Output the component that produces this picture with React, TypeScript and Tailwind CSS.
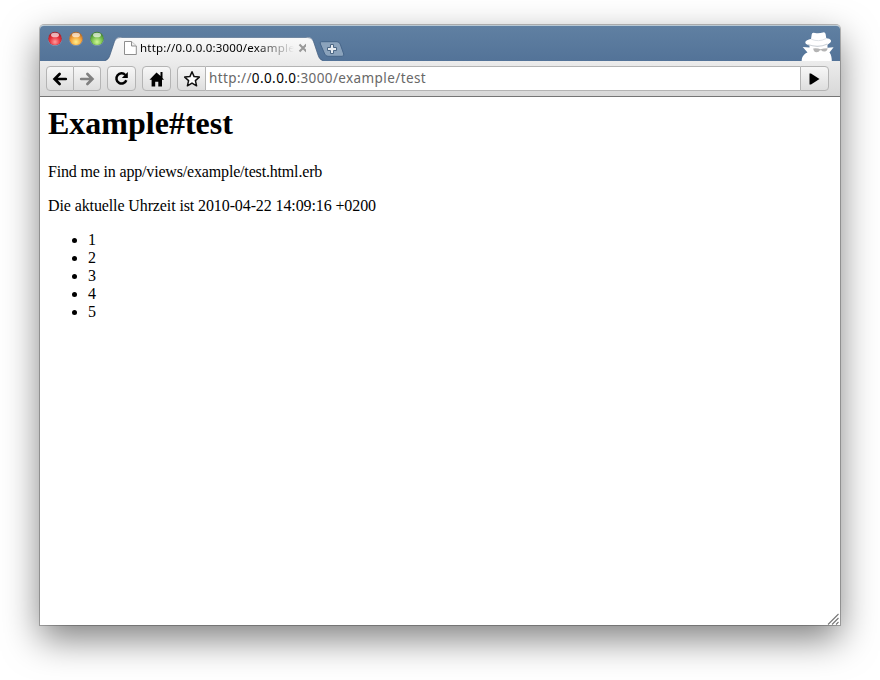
import React from "react";

const BUTTON =
  "flex h-[25px] items-center justify-center border border-[#b4b4b4] bg-linear-to-b from-[#f7f7f7] to-[#dedede]";

function Light({ id, dark, mid, glow }: { id: string; dark: string; mid: string; glow: string }) {
  return (
    <svg width="15" height="16" viewBox="0 0 15 16">
      <defs>
        <radialGradient id={id} cx="50%" cy="75%" r="78%">
          <stop offset="0" stopColor={glow} />
          <stop offset="0.55" stopColor={mid} />
          <stop offset="1" stopColor={dark} />
        </radialGradient>
      </defs>
      <circle cx="7" cy="8.1" r="7" fill="#9fb4cb" opacity="0.6" />
      <circle cx="7" cy="7.5" r="6.8" fill={dark} opacity="0.85" />
      <circle cx="7" cy="7.7" r="6.4" fill={`url(#${id})`} />
      <ellipse cx="7" cy="4" rx="4" ry="2.3" fill="#fff" opacity="0.65" />
    </svg>
  );
}

function TabEdge({ right = false }: { right?: boolean }) {
  return (
    <svg width="17" height="24" viewBox="0 0 17 24" className={right ? "-scale-x-100" : ""}>
      <defs>
        <linearGradient id="tabFill" x1="0" y1="0" x2="0" y2="1">
          <stop offset="0" stopColor="#f9f9f9" />
          <stop offset="1" stopColor="#ececec" />
        </linearGradient>
      </defs>
      <path d="M0 24C3 23 4 21 5 18L9 6C10.5 1.5 12 0 16 0H17V24Z" fill="url(#tabFill)" />
      <path d="M0 23.5C3 22.5 4 21 5 18L9 6C10.5 1.5 12 .5 17 .5" fill="none" stroke="#415b7b" strokeWidth="1" opacity="0.65" />
    </svg>
  );
}

function Arrow({ color, flip = false }: { color: string; flip?: boolean }) {
  return (
    <svg width="16" height="14" viewBox="0 0 16 14" className={flip ? "-scale-x-100" : ""}>
      <path d="M7.6 2L2.6 7L7.6 12M3 7H13.8" fill="none" stroke={color} strokeWidth="2.7" strokeLinecap="round" />
    </svg>
  );
}

function Incognito() {
  return (
    <svg width="33" height="29" viewBox="0 0 33 29">
      <path
        d="M.7 29C.7 24.5 3 22 6.5 20.5L1.7 15L8.5 15.5V13.2C4.5 12.5 3.5 10.5 5 9C6.3 7.8 8 7.3 10 7L10.8 2Q11.2 .4 14 .9Q18 1.6 22 .4Q24.3 0 24.6 2L25.3 6.2C30 6.4 31.5 9.3 28.5 11.3L26.5 12.8V15.8L32.6 15.2L28.5 20.5C30.3 22.5 30.8 26 30.8 29Z"
        fill="#fff"
      />
      <path d="M10.2 7.2Q17.5 10.4 25 6.6" fill="none" stroke="#dfe3e7" strokeWidth="1" />
      <path d="M6.5 12.6Q17.5 16.4 26.5 12" fill="none" stroke="#cdd2d8" strokeWidth="1.1" />
      <path d="M12.2 16.4Q17 16 19.4 17.2Q22.5 16.2 26.6 16.2Q26.4 19.3 23.6 19.5Q21.2 19.6 20.3 18.2H18.9Q18 20.4 15.4 20.3Q12.6 19.8 12.2 16.4Z" fill="#b4b4b4" />
    </svg>
  );
}

function TitleBar() {
  return (
    <div className="flex h-9 items-start rounded-t-[4px] border-t border-[#b9c9d4] bg-linear-to-b from-[#6080a2] to-[#537398]">
      <div className="ml-[8px] mt-[5px] flex gap-[6px]">
        <Light id="closeLight" dark="#9b1c25" mid="#e92c39" glow="#ff9c9c" />
        <Light id="minimizeLight" dark="#a86022" mid="#f4a23a" glow="#fff08c" />
        <Light id="zoomLight" dark="#387a2a" mid="#74bd4c" glow="#d0f895" />
      </div>
      <div className="mt-[11px] flex h-6">
        <TabEdge />
        <div className="flex h-6 w-[184px] items-center border-t border-[#7188a2] bg-linear-to-b from-[#f9f9f9] to-[#ececec] pb-[3px]">
          <svg width="13" height="14" viewBox="0 0 13 14" className="ml-[2px] shrink-0">
            <path d="M.5 .5H7.5L12.3 5V13.5H.5Z" fill="#fff" stroke="#8e8e8e" />
            <path d="M7.5 .5V5H12.3" fill="#eee" stroke="#8e8e8e" />
          </svg>
          <span className="ml-[3px] w-[154px] shrink-0 overflow-hidden whitespace-nowrap bg-linear-to-r from-black from-75% to-transparent bg-clip-text font-['Noto_Sans','Open_Sans',sans-serif] text-[11.5px] leading-[16px] tracking-[0.2px] text-transparent">
            http://0.0.0.0:3000/example
          </span>
          <svg width="10" height="10" viewBox="0 0 10 10" className="ml-[4px] shrink-0">
            <path d="M1.5 1.5L8.5 8.5M8.5 1.5L1.5 8.5" stroke="#999" strokeWidth="2.1" />
          </svg>
        </div>
        <TabEdge right />
      </div>
      <svg width="26" height="16" viewBox="0 0 26 16" className="-ml-[4px] mt-[15px]">
        <path d="M2.5 .7H18Q20.3 .7 21.2 3L24.7 13Q25.3 15.3 23 15.3H9Q6.7 15.3 5.7 13L1.4 3Q.5 .7 2.5 .7Z" fill="#8ba3bc" stroke="#466589" />
        <path d="M11.5 3.5H14.5V6.5H17.5V9.5H14.5V12.5H11.5V9.5H8.5V6.5H11.5Z" fill="#e8edf2" stroke="#4b6684" />
      </svg>
      <div className="ml-auto mr-[6px] mt-[6px]">
        <Incognito />
      </div>
    </div>
  );
}

function Toolbar() {
  return (
    <div className="flex h-9 items-start border-b border-[#757575] bg-linear-to-b from-[#ececec] to-[#d8d8d8] pl-[6px] pt-[5px]">
      <div className={`${BUTTON} w-7 rounded-l-[4px]`}>
        <Arrow color="#000" />
      </div>
      <div className={`${BUTTON} w-[27px] rounded-r-[4px] border-l-0`}>
        <Arrow color="#808080" flip />
      </div>
      <div className={`${BUTTON} ml-[6px] w-[29px] rounded-[4px]`}>
        <svg width="15" height="15" viewBox="0 0 15 15">
          <path d="M11.3 4A5.1 5.1 0 1 0 12.3 9.3" fill="none" stroke="#000" strokeWidth="2.5" />
          <path d="M13.8 1V7H7.8Z" fill="#000" />
        </svg>
      </div>
      <div className={`${BUTTON} ml-[6px] w-[29px] rounded-[4px]`}>
        <svg width="16" height="16" viewBox="0 0 16 16">
          <path d="M7.5 1.5L11.5 5V1H13.5V7L15 8.7H13V15.5H9.3V10.8H6.2V15.5H2.6V8.7H.5Z" fill="#000" />
        </svg>
      </div>
      <div className={`${BUTTON} ml-[6px] w-[29px] rounded-l-[4px]`}>
        <svg width="18" height="18" viewBox="0 0 18 18">
          <path d="M9 1.8L11.1 6.6L16.3 7.1L12.4 10.6L13.6 15.8L9 13.1L4.4 15.8L5.6 10.6L1.7 7.1L6.9 6.6Z" fill="#fff" stroke="#111" strokeWidth="1.5" strokeLinejoin="round" />
        </svg>
      </div>
      <div className="flex h-[25px] w-[594px] items-center border-y border-[#b4b4b4] bg-white pb-px pl-[3px]">
        <span className="whitespace-nowrap font-['Noto_Sans','Open_Sans',sans-serif] text-[13.5px] leading-[18px] tracking-[0.4px] text-[#686868]">
          http://<span className="text-black">0.0.0.0</span>:3000/example/test
        </span>
      </div>
      <div className={`${BUTTON} w-[29px] rounded-r-[4px]`}>
        <svg width="11" height="12" viewBox="0 0 11 12">
          <path d="M.5 .5H2L10.5 6L2 11.5H.5Z" fill="#000" />
        </svg>
      </div>
    </div>
  );
}

export default function App() {
  return (
    <div className="h-[680px] w-[880px] overflow-hidden bg-white px-10 pt-[25px]">
      <div className="flex h-[600px] w-[800px] flex-col rounded-t-[4px] bg-white shadow-[0_0_0_1px_rgba(0,0,0,0.25),0_14px_36px_rgba(0,0,0,0.5)]">
        <TitleBar />
        <Toolbar />
        <main className="flex flex-1 flex-col px-2 pt-[8px] font-['Liberation_Serif',serif] text-[16px] leading-[18px] text-black">
          <h1 className="text-[32px] font-bold leading-[37px]">Example#test</h1>
          <p className="mt-[21px] tracking-[-0.17px]">Find me in app/views/example/test.html.erb</p>
          <p className="mt-4 tracking-[-0.11px]">Die aktuelle Uhrzeit ist 2010-04-22 14:09:16 +0200</p>
          <ul className="mt-4 list-disc pl-10">
            {[1, 2, 3, 4, 5].map((n) => (
              <li key={n}>{n}</li>
            ))}
          </ul>
          <svg width="12" height="12" viewBox="0 0 12 12" className="-mr-[7px] ml-auto mt-auto">
            <path d="M1 11.5L11.5 1M5 11.5L11.5 5M9 11.5L11.5 9" stroke="#777" strokeWidth="1.1" />
          </svg>
        </main>
      </div>
    </div>
  );
}
